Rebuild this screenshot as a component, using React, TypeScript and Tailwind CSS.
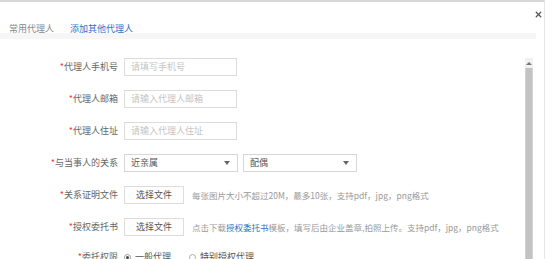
import { X } from "lucide-react";

function Label({ text }: { text: string }) {
    return (
        <div className="w-[118px] shrink-0 text-right text-[#666]">
            <span className="text-[#e4393c]">*</span>
            {text}
        </div>
    );
}

function TextInput({ placeholder }: { placeholder: string }) {
    return (
        <div className="ml-[6px] w-[113px] h-[18px] border border-[#dcdcdc] flex items-center px-[6px] text-[#c4c4c4]">
            {placeholder}
        </div>
    );
}

function Select({ value, className }: { value: string; className?: string }) {
    return (
        <div className={"w-[114px] h-[18px] border border-[#d6d6d6] flex items-center justify-between pl-[6px] pr-[7px] text-[#555] " + (className ?? "")}>
            <span>{value}</span>
            <span className="w-0 h-0 border-l-[3px] border-r-[3px] border-t-[4px] border-l-transparent border-r-transparent border-t-[#666]" />
        </div>
    );
}

function FileButton() {
    return (
        <div className="ml-[6px] w-[60px] h-[18px] border border-[#dcdcdc] flex items-center justify-center text-[#555]">
            选择文件
        </div>
    );
}

export default function App() {
    return (
        <div className="w-[553px] h-[259px] overflow-hidden bg-white text-[9px] leading-[14px] font-['Noto_Sans_CJK_SC','Noto_Sans',sans-serif]">
            <div className="w-[545px] h-full border-t-2 border-t-[#d8d8d8] border-r border-r-[#e6e6e6] flex flex-col">
                <header className="h-[31px] flex justify-between">
                    <div className="flex gap-[16px] pl-[9px] pt-[20px]">
                        <span className="text-[#888]">常用代理人</span>
                        <span className="text-[#1f74c9]">添加其他代理人</span>
                    </div>
                    <div className="pt-[8px] pr-[1px] text-[#555]">
                        <X size={9} strokeWidth={3.5} />
                    </div>
                </header>
                <div className="w-[536px] h-[6px] bg-[#f6f6f6]" />

                <div className="flex flex-1 min-h-0">
                    <div className="w-[525px] pt-[19px] flex flex-col gap-[14px]">
                        <div className="h-[18px] flex items-center">
                            <Label text="代理人手机号" />
                            <TextInput placeholder="请填写手机号" />
                        </div>
                        <div className="h-[18px] flex items-center">
                            <Label text="代理人邮箱" />
                            <TextInput placeholder="请输入代理人邮箱" />
                        </div>
                        <div className="h-[18px] flex items-center">
                            <Label text="代理人住址" />
                            <TextInput placeholder="请输入代理人住址" />
                        </div>
                        <div className="h-[18px] flex items-center">
                            <Label text="与当事人的关系" />
                            <Select value="近亲属" className="ml-[6px]" />
                            <Select value="配偶" className="ml-[5px]" />
                        </div>
                        <div className="h-[18px] flex items-center">
                            <Label text="关系证明文件" />
                            <FileButton />
                            <span className="ml-[8px] text-[8.5px] text-[#999]">每张图片大小不超过20M，最多10张，支持pdf，jpg，png格式</span>
                        </div>
                        <div className="h-[18px] flex items-center">
                            <Label text="授权委托书" />
                            <FileButton />
                            <span className="ml-[8px] text-[8.5px] text-[#999]">
                                点击下载<span className="text-[#1f74c9]">授权委托书</span>模板，填写后由企业盖章,拍照上传。支持pdf，jpg，png格式
                            </span>
                        </div>
                        <div className="h-[18px] flex items-center">
                            <Label text="委托权限" />
                            <div className="ml-[6px] flex items-center gap-[4px] text-[#555]">
                                <span className="w-[7px] h-[7px] rounded-full border border-[#999] flex items-center justify-center">
                                    <span className="w-[3px] h-[3px] rounded-full bg-[#444]" />
                                </span>
                                一般代理
                            </div>
                            <div className="ml-[18px] flex items-center gap-[4px] text-[#555]">
                                <span className="w-[7px] h-[7px] rounded-full border border-[#aaa]" />
                                特别授权代理
                            </div>
                        </div>
                    </div>

                    <div className="w-[8px] pt-[19px] flex flex-col">
                        <div className="h-[10px] bg-[#f1f1f1] flex items-center justify-center">
                            <span className="w-0 h-0 border-l-[3px] border-r-[3px] border-b-[3px] border-l-transparent border-r-transparent border-b-[#777]" />
                        </div>
                        <div className="flex-1 bg-[#c3c3c3] border-x border-[#d3d3d3]" />
                    </div>
                </div>
            </div>
        </div>
    );
}
